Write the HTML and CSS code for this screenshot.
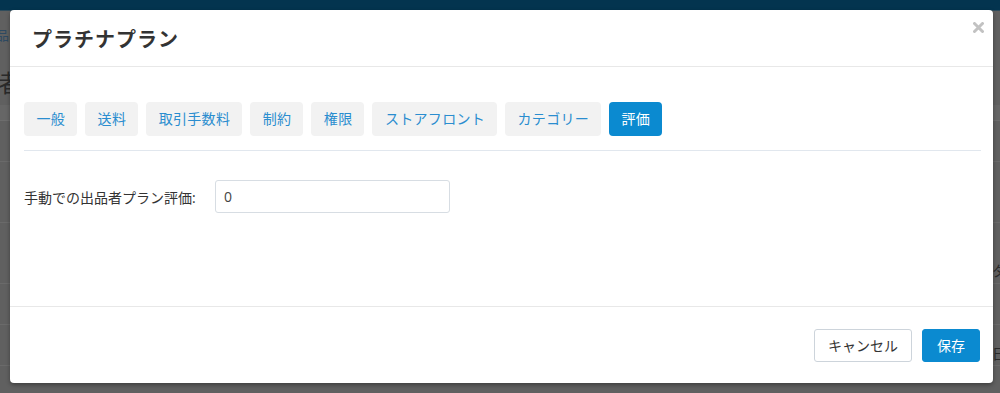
FILE: index.html
```html
<!DOCTYPE html>
<html lang="ja">
<head>
    <meta charset="UTF-8">
    <meta name="viewport" content="width=device-width, initial-scale=1.0">
    <title>プラチナプラン</title>
    <link rel="stylesheet" href="styles.css">
</head>
<body>
    <div class="topbar"></div>
    <div class="page">
        <div class="crumb">商品</div>
        <div class="page-title">出品者</div>
        <div class="band"></div>
        <div class="row"></div>
        <div class="row tall"></div>
        <div class="row tall"><span class="side low">タ</span></div>
        <div class="row"></div>
        <div class="row"><span class="side">日</span></div>
    </div>

    <div class="modal">
        <div class="modal-header">
            <h3>プラチナプラン</h3>
            <svg class="close" width="11" height="11" viewBox="0 0 11 11">
                <path d="M1.5 1.5 L9.5 9.5 M9.5 1.5 L1.5 9.5" stroke="#c2c2c2" stroke-width="3" stroke-linecap="round"/>
            </svg>
        </div>
        <div class="modal-body">
            <div class="tabs">
                <div class="tab">一般</div>
                <div class="tab">送料</div>
                <div class="tab">取引手数料</div>
                <div class="tab">制約</div>
                <div class="tab">権限</div>
                <div class="tab">ストアフロント</div>
                <div class="tab">カテゴリー</div>
                <div class="tab active">評価</div>
            </div>
            <div class="form-row">
                <label for="rating">手動での出品者プラン評価:</label>
                <input type="text" id="rating" value="0">
            </div>
        </div>
        <div class="modal-footer">
            <button class="btn">キャンセル</button>
            <button class="btn primary">保存</button>
        </div>
    </div>
</body>
</html>
```

FILE: styles.css
```css
body {
    margin: 0;
    font-family: 'Open Sans', 'Noto Sans CJK JP', sans-serif;
    background: #606060;
    color: #333;
    height: 393px;
    overflow: hidden;
}
.topbar {
    height: 10px;
    background: #03344f;
    border-bottom: 1px solid #2f4c5c;
}
.page {
    color: #2a2a2a;
}
.crumb {
    font-size: 13px;
    color: #2e4a62;
    margin: 14px 0 0 -17px;
    height: 20px;
    line-height: 20px;
}
.page-title {
    font-size: 24px;
    margin: 16px 0 0 -50px;
    height: 44px;
    line-height: 44px;
}
.band {
    height: 15px;
    background: #666;
    border-bottom: 1px solid #6d6d6d;
}
.row {
    height: 40px;
    border-bottom: 1px solid #6a6a6a;
    position: relative;
}
.row.tall {
    height: 60px;
}
.side {
    position: absolute;
    right: -6px;
    top: 18px;
    font-size: 14px;
    color: #2a2a2a;
}
.side.low {
    top: 37px;
}

/* modal */
.modal {
    position: absolute;
    left: 10px;
    top: 10px;
    width: 983px;
    height: 373px;
    background: #fff;
    border-radius: 4px;
    box-shadow: 0 2px 4px rgba(0, 0, 0, 0.35);
    display: flex;
    flex-direction: column;
}
.modal-header {
    height: 56px;
    border-bottom: 1px solid #e8e8e8;
    display: flex;
    align-items: center;
    justify-content: space-between;
    padding: 0 9px 0 22px;
}
.modal-header h3 {
    margin: 0;
    font-size: 20px;
    font-weight: bold;
    color: #333;
    letter-spacing: 1px;
}
.close {
    align-self: flex-start;
    margin-top: 12px;
}
.modal-body {
    flex: 1;
    padding: 35px 12px 0 14px;
}
.tabs {
    display: flex;
    gap: 8px;
    padding-bottom: 14px;
    border-bottom: 1px solid #e1e7ee;
}
.tab {
    height: 34px;
    line-height: 34px;
    padding: 0 12px 0 12.5px;
    font-size: 14px;
    color: #2a8dcf;
    background: #f2f2f2;
    border-radius: 4px;
    letter-spacing: 0.3px;
}
.tab.active {
    background: #0b8ad0;
    color: #fff;
}
.form-row {
    display: flex;
    align-items: center;
    margin-top: 29px;
}
.form-row label {
    width: 191px;
    font-size: 14px;
    color: #333;
}
.form-row input {
    width: 235px;
    height: 33px;
    box-sizing: border-box;
    border: 1px solid #d7dde3;
    border-radius: 3px;
    padding: 0 8px;
    font-family: 'Open Sans', sans-serif;
    font-size: 14px;
    color: #444;
}
.modal-footer {
    height: 76px;
    border-top: 1px solid #e8e8e8;
    display: flex;
    align-items: center;
    justify-content: flex-end;
    gap: 10px;
    padding: 0 13px;
}
.btn {
    height: 33px;
    padding: 0 13px;
    font-family: 'Open Sans', 'Noto Sans CJK JP', sans-serif;
    font-size: 14px;
    color: #333;
    background: #fff;
    border: 1px solid #cdd4db;
    border-radius: 3px;
}
.btn.primary {
    background: #0b8ad0;
    border-color: #0b8ad0;
    color: #fff;
    padding: 0 14px;
}
```
